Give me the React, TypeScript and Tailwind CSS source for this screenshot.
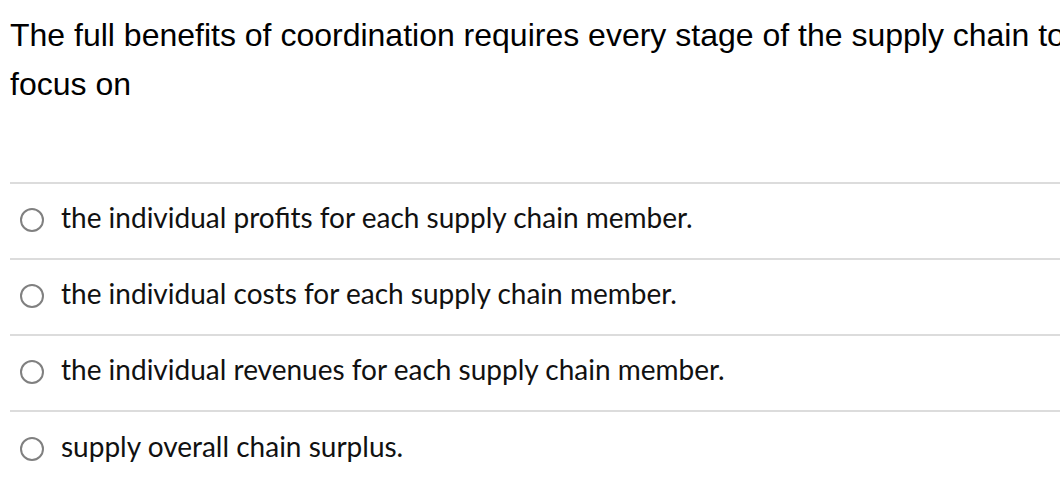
const options = [
  "the individual profits for each supply chain member.",
  "the individual costs for each supply chain member.",
  "the individual revenues for each supply chain member.",
  "supply overall chain surplus.",
];

export default function App() {
  return (
    <div className="w-[1060px] h-[500px] overflow-hidden bg-white">
      <div className="w-[1120px] pl-[10px]">
        <p className="w-[1075px] pt-[11px] text-[32px] leading-[49px] text-black font-['Liberation_Sans',Arial,sans-serif]">
          The full benefits of coordination requires every stage of the supply chain to focus on
        </p>
        <div className="mt-[73px] border-t-2 border-[#dcdcdc]">
          {options.map((opt, i) => (
            <label
              key={i}
              className={`flex items-center h-[76px] ${
                i < options.length - 1 ? "border-b-2 border-[#dcdcdc]" : ""
              }`}
            >
              <span className="ml-[10px] mb-[2px] w-[24px] h-[24px] rounded-full border-2 border-[#808080] shrink-0" />
              <span className="ml-[17px] mb-[9px] text-[28px] leading-[34px] text-[#111] font-['Lato',sans-serif]">
                {opt}
              </span>
            </label>
          ))}
        </div>
      </div>
    </div>
  );
}
